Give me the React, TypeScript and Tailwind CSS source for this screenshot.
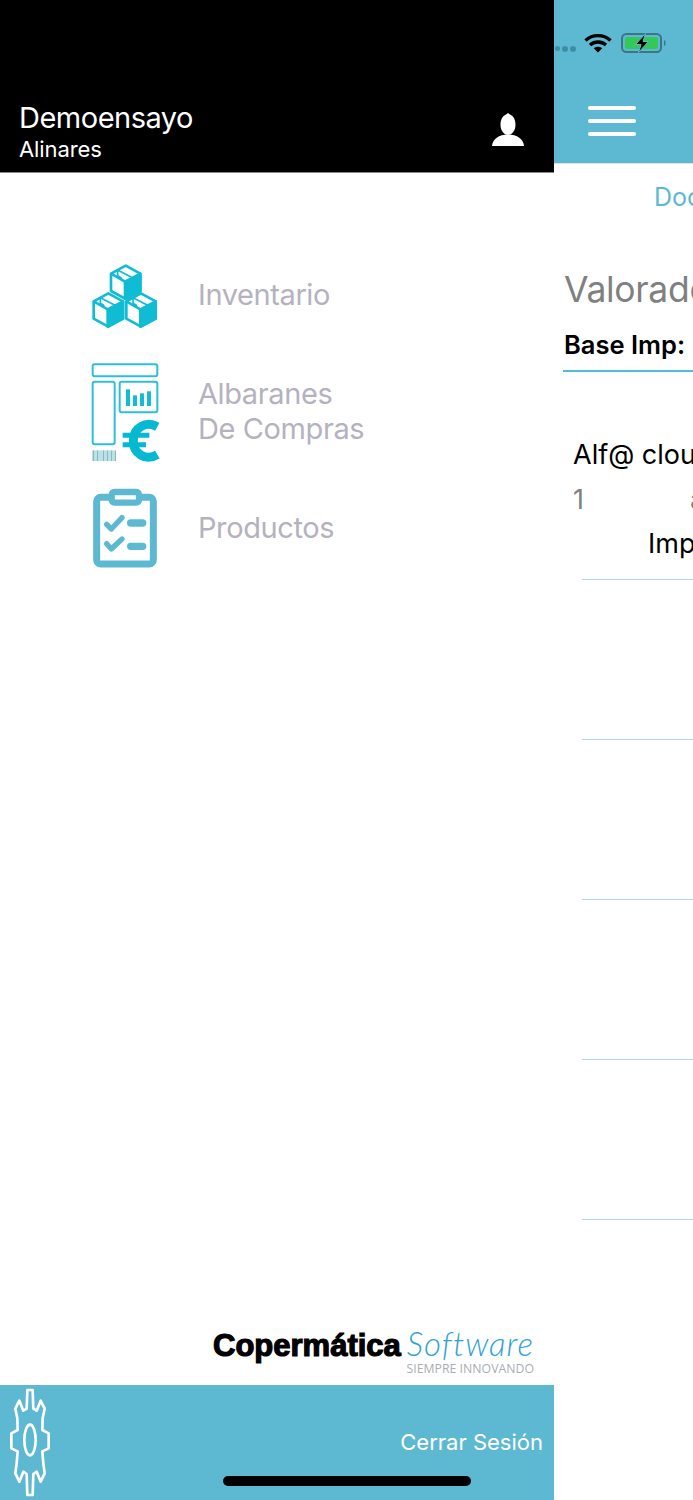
import React from "react";

const BOXES = [
  { cx: 167, ty: 47 },
  { cx: 115, ty: 130 },
  { cx: 213, ty: 130 },
];

function BoxesIcon() {
  return (
    <svg width="120" height="110" viewBox="0 0 360 330" className="shrink-0">
      {BOXES.map((b) => (
        <g key={b.cx} stroke="#0fbcd4" strokeWidth="8" strokeLinejoin="round" fill="white">
          <path d={`M${b.cx} ${b.ty} L${b.cx + 44} ${b.ty + 24} V${b.ty + 76} L${b.cx} ${b.ty + 100} L${b.cx - 44} ${b.ty + 76} V${b.ty + 24} Z`} />
          <path d={`M${b.cx - 2} ${b.ty + 48} L${b.cx + 44} ${b.ty + 24} V${b.ty + 76} L${b.cx - 2} ${b.ty + 100} Z`} fill="#0fbcd4" />
          <path d={`M${b.cx - 44} ${b.ty + 24} L${b.cx - 2} ${b.ty + 48}`} fill="none" />
          <path d={`M${b.cx - 24} ${b.ty + 13} L${b.cx + 20} ${b.ty + 36} M${b.cx - 24} ${b.ty + 13} V${b.ty + 30} L${b.cx - 14} ${b.ty + 36} V${b.ty + 42}`} fill="none" strokeWidth="5" />
        </g>
      ))}
    </svg>
  );
}

function ReportIcon() {
  const bars = [3, 2, 3, 2, 2, 3, 2, 3, 2, 3, 2, 3];
  return (
    <svg width="120" height="115" viewBox="0 0 360 345" className="shrink-0">
      <g fill="none" stroke="#2cc0d6" strokeWidth="6">
        <rect x="68" y="25" width="194" height="36" rx="6" />
        <rect x="68" y="77" width="66" height="188" rx="6" />
        <rect x="149" y="77" width="113" height="92" rx="6" />
      </g>
      <g fill="#11bcd4">
        <rect x="168" y="100" width="12" height="50" />
        <rect x="189" y="118" width="12" height="32" />
        <rect x="210" y="112" width="12" height="38" />
        <rect x="231" y="106" width="12" height="44" />
      </g>
      <g fill="#3f9fb0">
        {bars.map((w, i) => (
          <rect key={i} x={68 + i * 6} y="283" width={w} height="32" />
        ))}
      </g>
      <g fill="none" stroke="#06b8d2">
        <path d="M262 212 C228 194 192 214 190 252 C188 294 228 316 262 296" strokeWidth="27" />
        <path d="M158 238 H238 M158 266 H228" strokeWidth="15" />
      </g>
    </svg>
  );
}

function ChecklistIcon() {
  return (
    <svg width="120" height="105" viewBox="0 0 360 315" className="shrink-0">
      <g fill="none" stroke="#5db9d2" strokeLinecap="round" strokeLinejoin="round">
        <rect x="80" y="67" width="170" height="200" rx="12" strokeWidth="21" />
        <rect x="125" y="51" width="82" height="32" rx="8" fill="white" strokeWidth="19" />
        <path d="M110 148 L124 162 L156 128 M110 206 L124 222 L156 192" strokeWidth="16" />
        <path d="M182 144 H218 M182 214 H218" strokeWidth="22" />
      </g>
    </svg>
  );
}

function GearIcon() {
  return (
    <svg width="120" height="120" viewBox="0 0 360 360" className="absolute left-0 -top-[5px]">
      <g fill="none" stroke="white" strokeWidth="8" strokeLinejoin="round">
        <path d="M82 30 H98 L100 86 L110 92 L122 62 L134 86 L128 115 L127 150 L146 160 V205 L127 214 L130 250 L134 280 L122 305 L110 275 L100 282 L98 345 H82 L80 282 L70 275 L58 305 L46 280 L50 250 L53 214 L34 205 V160 L53 150 L52 115 L46 86 L58 62 L70 92 L80 86 Z" />
        <ellipse cx="90" cy="180" rx="17" ry="46" />
      </g>
    </svg>
  );
}

function PersonIcon() {
  return (
    <svg width="34" height="36" viewBox="0 0 34 36" className="shrink-0">
      <path d="M17 0 L19 1.6 C22.5 3 24.5 7 24.5 12 C24.5 17.5 21 22 17 22 C13 22 9.5 17.5 9.5 12 C9.5 7 11.5 3 15 1.6 Z" fill="white" />
      <path d="M1 33 C1.5 26 8 21.5 17 21.5 C26 21.5 32.5 26 33 33 Z" fill="white" />
    </svg>
  );
}

function WifiIcon() {
  return (
    <svg width="28" height="20" viewBox="0 0 28 20" className="shrink-0">
      <g fill="none" stroke="black" strokeWidth="3.4">
        <path d="M1.5 7.5 C8.5 1 19.5 1 26.5 7.5" />
        <path d="M6 12 C10.5 8 17.5 8 22 12" />
      </g>
      <path d="M9.8 15.2 C12.2 13.2 15.8 13.2 18.2 15.2 L14 19.6 Z" fill="black" />
    </svg>
  );
}

function BatteryIcon() {
  return (
    <svg width="46" height="20" viewBox="0 0 46 20" className="shrink-0">
      <rect x="1" y="1" width="39" height="18" rx="4.5" fill="none" stroke="#3f7486" strokeWidth="2" />
      <rect x="4" y="4" width="33" height="12" rx="2" fill="#34c759" />
      <path d="M43 7 C45 7.5 45 12.5 43 13 Z" fill="#3f7486" />
      <path d="M24.5 0.5 L14.5 11.5 H20 L17.5 19.5 L27.5 8.5 H22 Z" fill="black" stroke="#5db9d2" strokeWidth="1" />
    </svg>
  );
}

function MenuItem({ icon, lines, className, textClass }: { icon: React.ReactNode; lines: string[]; className: string; textClass: string }) {
  return (
    <div className={`flex items-center ${className}`}>
      <div className="ml-[70px] mr-[8px]">{icon}</div>
      <div className={`text-[29px] leading-[35px] tracking-[-0.4px] text-[#b5b2c0] whitespace-nowrap ${textClass}`}>
        {lines.map((l) => (
          <div key={l}>{l}</div>
        ))}
      </div>
    </div>
  );
}

function Drawer() {
  return (
    <div className="w-[554px] h-full flex flex-col bg-white shrink-0 font-['Inter',sans-serif]">
      <div className="h-[173px] bg-black border-b border-[#8a8a8a] flex items-end justify-between pl-[19px] pr-[29px] pb-[10px] shrink-0">
        <div className="text-white">
          <div className="text-[29px] leading-[36px] tracking-[-0.5px]">Demoensayo</div>
          <div className="text-[22px] leading-[26px] tracking-[-0.1px]">Alinares</div>
        </div>
        <div className="mb-[13px]">
          <PersonIcon />
        </div>
      </div>

      <div className="flex flex-col mt-[77px]">
        <MenuItem icon={<BoxesIcon />} lines={["Inventario"]} className="h-[110px] -mb-[4px]" textClass="mb-[22px]" />
        <MenuItem icon={<ReportIcon />} lines={["Albaranes", "De Compras"]} className="h-[115px]" textClass="mb-[6px]" />
        <MenuItem icon={<ChecklistIcon />} lines={["Productos"]} className="mt-[4px] h-[105px]" textClass="" />
      </div>

      <div className="mt-auto flex justify-end pr-[20px] pb-[9px]">
        <div className="flex flex-col items-end">
          <div className="flex items-baseline">
            <span className="text-[31px] leading-[32px] font-['Liberation_Sans',sans-serif] font-black text-black [-webkit-text-stroke:1.2px_black]">Copermática</span>
            <span className="ml-[6px] text-[33px] leading-[32px] font-['Lato',sans-serif] font-light italic text-[#2ea3d5] tracking-[1px]">Software</span>
          </div>
          <div className="text-[12.3px] leading-[14px] font-['Open_Sans',sans-serif] text-[#a9adb3]">SIEMPRE INNOVANDO</div>
        </div>
      </div>

      <div className="relative h-[115px] bg-[#5db9d2] shrink-0 flex items-center justify-end pr-[11px]">
        <GearIcon />
        <span className="text-[22px] text-white">Cerrar Sesión</span>
      </div>
    </div>
  );
}

function RightPane() {
  return (
    <div className="flex-1 min-w-0 h-full overflow-hidden bg-white font-['Inter',sans-serif]">
      <div className="h-[164px] bg-[#5db9d2] border-b border-[#e2e2e2] pt-[32px]">
        <div className="flex items-center h-[22px]">
          <div className="flex gap-[2px] mt-[12px] ml-[1px] mr-[8px]">
            <span className="w-[5px] h-[5px] rounded-full bg-[#3f8ea3]" />
            <span className="w-[6px] h-[6px] rounded-full bg-[#3f8ea3]" />
            <span className="w-[6px] h-[6px] rounded-full bg-[#3f8ea3]" />
          </div>
          <WifiIcon />
          <div className="ml-[9px]">
            <BatteryIcon />
          </div>
        </div>
        <div className="ml-[34px] mt-[52px] w-[48px] flex flex-col gap-[9px]">
          <div className="h-[4px] bg-white rounded-full" />
          <div className="h-[4px] bg-white rounded-full" />
          <div className="h-[4px] bg-white rounded-full" />
        </div>
      </div>

      <div className="whitespace-nowrap">
        <div className="ml-[100px] mt-[18px] text-[25px] leading-[30px] text-[#5db9d2]">Documentos</div>
        <div className="ml-[10px] mt-[56px] text-[35.5px] leading-[44px] tracking-[-0.3px] text-[#808080]">Valorado</div>
        <div className="ml-[10px] mt-[18px] text-[25.5px] leading-[30px] font-semibold text-black">Base Imp:</div>
        <div className="ml-[9px] mt-[10px] h-[2px] bg-[#4fbdd6]" />
        <div className="ml-[19px] mt-[66px] text-[27px] leading-[34px] text-black">Alf@ cloud</div>
        <div className="ml-[19px] mt-[12px] flex text-[27px] leading-[32px] text-[#808080]">
          <span>1</span>
          <span className="ml-[106px]">a</span>
        </div>
        <div className="ml-[94px] mt-[12px] text-[27px] leading-[32px] text-black">Importe</div>
        <div className="ml-[28px] mt-[19px] flex flex-col">
          {[0, 1, 2, 3, 4].map((i) => (
            <div key={i} className={`border-t border-[#b4d9e4] ${i === 4 ? "" : "h-[160px]"}`} />
          ))}
        </div>
      </div>
    </div>
  );
}

export default function App() {
  return (
    <div className="relative w-[693px] h-[1500px] flex overflow-hidden bg-white">
      <Drawer />
      <RightPane />
      <div className="absolute left-[223px] top-[1476px] w-[248px] h-[10px] rounded-full bg-black" />
    </div>
  );
}
